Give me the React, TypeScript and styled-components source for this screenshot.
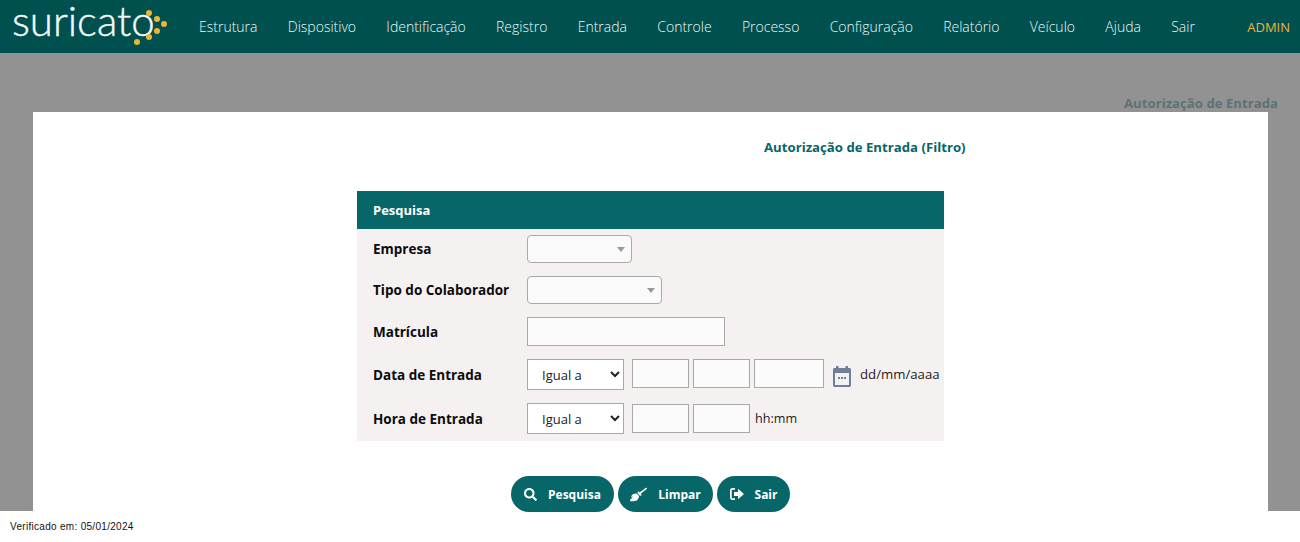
import React from "react";
import styled, { createGlobalStyle } from "styled-components";
import { FaBroom, FaSearch } from "react-icons/fa";

const GlobalStyle = createGlobalStyle`
  html, body {
    margin: 0;
    padding: 0;
    height: 100%;
    background: #fff;
    font-family: "Open Sans", "Liberation Sans", sans-serif;
  }
  * {
    box-sizing: border-box;
  }
`;

const menuItems = [
  "Estrutura",
  "Dispositivo",
  "Identificação",
  "Registro",
  "Entrada",
  "Controle",
  "Processo",
  "Configuração",
  "Relatório",
  "Veículo",
  "Ajuda",
  "Sair",
];

const logoDots = [
  [137, 42],
  [149, 37],
  [157, 31],
  [164, 24],
  [157, 19],
  [149, 13],
];

const SignOutIcon = () => (
  <svg width="14" height="12" viewBox="0 0 14 12" fill="currentColor">
    <path d="M5 0H2.4C1 0 0 1 0 2.4v7.2C0 11 1 12 2.4 12H5v-1.7H2.6c-.6 0-.9-.3-.9-.9V2.6c0-.6.3-.9.9-.9H5z" />
    <path d="M8 .8 14 6l-6 5.200V8.100H4V3.900h4z" />
  </svg>
);

const CalendarIcon = () => (
  <svg width="18" height="21" viewBox="0 0 18 21" fill="#6f7f98">
    <rect x="3" y="0" width="2.500" height="4" />
    <rect x="12.500" y="0" width="2.500" height="4" />
    <path d="M1.500 2H16.500C17.400 2 18 2.600 18 3.500V19.500C18 20.400 17.400 21 16.500 21H1.500C.6 21 0 20.400 0 19.500V3.500C0 2.600.6 2 1.500 2Z" />
    <rect x="2" y="7" width="14" height="12" fill="#f5f1f1" />
    <rect x="5" y="11" width="2" height="2" />
    <rect x="8" y="11" width="2" height="2" />
    <rect x="11" y="11" width="2" height="2" />
  </svg>
);

const App: React.FC = () => {
  return (
    <Page>
      <GlobalStyle />
      <TopBar>
        <Logo>
          <LogoText>suricato</LogoText>
          <LogoDots width="168" height="53" viewBox="0 0 168 53">
            {logoDots.map(([cx, cy]) => (
              <circle key={cx + "-" + cy} cx={cx} cy={cy} r="3" fill="#ecb62f" />
            ))}
          </LogoDots>
        </Logo>
        <Menu>
          {menuItems.map((item) => (
            <MenuItem key={item}>{item}</MenuItem>
          ))}
        </Menu>
        <UserName>ADMIN</UserName>
      </TopBar>

      <Content>
        <Breadcrumb>Autorização de Entrada</Breadcrumb>
        <Card>
          <CardTitle>Autorização de Entrada (Filtro)</CardTitle>
          <FilterPanel>
            <PanelHeader>Pesquisa</PanelHeader>
            <PanelBody>
              <Row>
                <Label>Empresa</Label>
                <ComboBox $width={105} />
              </Row>
              <Row>
                <Label>Tipo do Colaborador</Label>
                <ComboBox $width={135} />
              </Row>
              <Row>
                <Label>Matrícula</Label>
                <TextInput $width={198} />
              </Row>
              <Row>
                <Label>Data de Entrada</Label>
                <Fields $align="flex-start">
                  <CompareSelect defaultValue="Igual a">
                    <option>Igual a</option>
                  </CompareSelect>
                  <DateParts>
                    <TextInput $width={57} />
                    <TextInput $width={57} />
                    <TextInput $width={70} />
                  </DateParts>
                  <CalendarButton>
                    <CalendarIcon />
                  </CalendarButton>
                  <Hint>dd/mm/aaaa</Hint>
                </Fields>
              </Row>
              <Row>
                <Label>Hora de Entrada</Label>
                <Fields $align="center">
                  <CompareSelect defaultValue="Igual a">
                    <option>Igual a</option>
                  </CompareSelect>
                  <DateParts>
                    <TextInput $width={57} />
                    <TextInput $width={57} />
                  </DateParts>
                  <TimeHint>hh:mm</TimeHint>
                </Fields>
              </Row>
            </PanelBody>
          </FilterPanel>
          <Actions>
            <ActionButton $width={103}>
              <FaSearch size={13} />
              <span>Pesquisa</span>
            </ActionButton>
            <ActionButton $width={95}>
              <FaBroom size={17} />
              <span>Limpar</span>
            </ActionButton>
            <ActionButton $width={73}>
              <SignOutIcon />
              <span>Sair</span>
            </ActionButton>
          </Actions>
        </Card>
      </Content>

      <Footer>Verificado em: 05/01/2024</Footer>
    </Page>
  );
};

const Page = styled.div`
  display: flex;
  flex-direction: column;
  height: 542px;
  overflow: hidden;
`;

const TopBar = styled.header`
  display: flex;
  align-items: center;
  flex: 0 0 53px;
  padding: 0 10px 0 12px;
  background: #00504f;
`;

const Logo = styled.div`
  position: relative;
  width: 156px;
  height: 53px;
  flex: none;
`;

const LogoText = styled.span`
  display: block;
  font-family: "Lato", sans-serif;
  font-weight: 300;
  font-size: 42px;
  line-height: 41px;
  color: #f4fbf8;
  -webkit-text-stroke: 0.4px #f4fbf8;
`;

const LogoDots = styled.svg`
  position: absolute;
  top: 0;
  left: -12px;
`;

const Menu = styled.nav`
  display: flex;
  align-items: center;
  gap: 30.3px;
  margin-left: 31px;
  flex: 1;
`;

const MenuItem = styled.a`
  font-weight: 300;
  font-size: 14px;
  color: #eef8f4;
  white-space: nowrap;
`;

const UserName = styled.span`
  font-weight: 400;
  font-size: 13px;
  color: #ecb63f;
`;

const Content = styled.main`
  display: flex;
  flex-direction: column;
  flex: 1;
  min-height: 0;
  padding: 41px 32px 0 33px;
  background: #929292;
`;

const Breadcrumb = styled.div`
  align-self: flex-end;
  margin-right: -10px;
  height: 18px;
  font-weight: 700;
  font-size: 13.2px;
  line-height: 18px;
  color: #5c7275;
`;

const Card = styled.section`
  display: flex;
  flex-direction: column;
  flex: 1;
  min-height: 0;
  background: #fff;
`;

const CardTitle = styled.h1`
  margin: 26px 0 0 731px;
  font-weight: 700;
  font-size: 13.2px;
  line-height: 18px;
  color: #066668;
`;

const FilterPanel = styled.div`
  align-self: flex-start;
  width: 587px;
  margin: 35px 0 0 324px;
  background: #f5f1f1;
`;

const PanelHeader = styled.div`
  height: 38px;
  padding-left: 16px;
  background: #066668;
  font-weight: 700;
  font-size: 13px;
  line-height: 38px;
  color: #fff;
`;

const PanelBody = styled.div`
  display: flex;
  flex-direction: column;
  gap: 13px;
  padding: 6px 0 7px 16px;
`;

const Row = styled.div`
  display: flex;
  align-items: center;
`;

const Label = styled.label`
  flex: 0 0 154px;
  font-weight: 700;
  font-size: 13.5px;
  line-height: 20px;
  color: #0c0c0c;
  white-space: nowrap;
`;

const ComboBox = styled.div<{ $width: number }>`
  position: relative;
  width: ${(p) => p.$width}px;
  height: 28px;
  background: #fafafa;
  border: 1px solid #aaa;
  border-radius: 4px;

  &::after {
    content: "";
    position: absolute;
    top: 11px;
    right: 6px;
    border-style: solid;
    border-width: 5px 4px 0;
    border-color: #999 transparent transparent;
  }
`;

const TextInput = styled.input.attrs({ type: "text" })<{ $width: number }>`
  width: ${(p) => p.$width}px;
  height: 29px;
  padding: 0 6px;
  background: #fbfbfb;
  border: 1px solid #a9a9a9;
  border-radius: 0;
  outline: none;
`;

const Fields = styled.div<{ $align: string }>`
  display: flex;
  align-items: ${(p) => p.$align};
`;

const CompareSelect = styled.select`
  width: 97px;
  height: 31px;
  margin-right: 8px;
  padding-left: 10px;
  background: #fff;
  border: 1px solid #a9a9a9;
  border-radius: 0;
  font-family: "Open Sans", sans-serif;
  font-size: 13px;
  color: #222;
`;

const DateParts = styled.div`
  display: flex;
  gap: 4px;
`;

const CalendarButton = styled.span`
  display: flex;
  height: 29px;
  align-items: flex-end;
  margin-left: 9px;
  padding-bottom: 1px;
`;

const Hint = styled.span`
  margin-left: 9px;
  font-size: 13.2px;
  line-height: 31px;
  color: #1c1c1c;
`;

const TimeHint = styled(Hint)`
  margin-left: 5px;
  font-size: 12.6px;
`;

const Actions = styled.div`
  display: flex;
  gap: 4px;
  margin: 35px 0 0 478px;
`;

const ActionButton = styled.button<{ $width: number }>`
  display: flex;
  align-items: center;
  justify-content: center;
  gap: 11px;
  width: ${(p) => p.$width}px;
  height: 36px;
  padding: 0;
  background: #066668;
  border: none;
  border-radius: 18px;
  font-family: "Open Sans", sans-serif;
  font-weight: 700;
  font-size: 12px;
  color: #fff;
`;

const Footer = styled.footer`
  flex: 0 0 30px;
  padding-left: 10px;
  font-family: "Liberation Sans", sans-serif;
  font-size: 10px;
  letter-spacing: 0.3px;
  line-height: 31px;
  color: #111;
`;

export default App;
